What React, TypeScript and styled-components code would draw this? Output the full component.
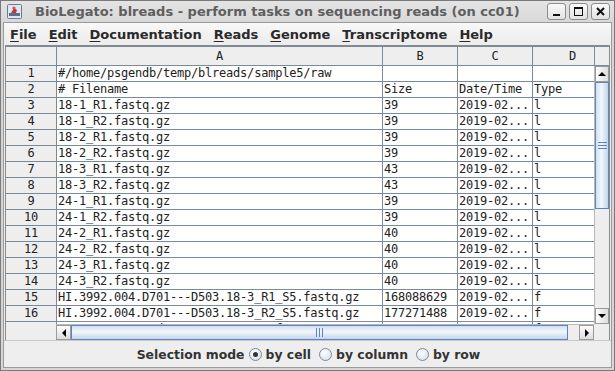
import React from 'react';
import styled, { createGlobalStyle } from 'styled-components';

const Global = createGlobalStyle`
  html, body { margin: 0; padding: 0; width: 615px; height: 371px; overflow: hidden; background: #eeeeee; }
  * { box-sizing: border-box; }
`;

const Window = styled.div`
  width: 615px;
  height: 371px;
  display: flex;
  flex-direction: column;
  background: #d6d6d6;
  border: 1px solid #7a7a7a;
`;

const TitleBar = styled.div`
  height: 21px;
  display: flex;
  align-items: center;
  padding: 0 4px 0 6px;
  background: linear-gradient(#e4e4e4, #d8d8d8);
`;

const Title = styled.div`
  flex: 1;
  margin-left: 13px;
  font: bold 13px "DejaVu Sans", sans-serif;
  color: #5e5e5e;
  white-space: nowrap;
`;

const WinButtons = styled.div`
  display: flex;
  gap: 3px;
`;

const WinButton = styled.div`
  width: 19px;
  height: 17px;
  border: 1px solid #8d8d8d;
  border-radius: 3px;
  background: linear-gradient(#fafafa, #e2e2e2);
  display: flex;
  align-items: center;
  justify-content: center;
`;

const Inner = styled.div`
  flex: 1;
  display: flex;
  flex-direction: column;
  margin: 0 2px 2px 2px;
  border: 1px solid #9a9a9a;
  background: #eeeeee;
  min-height: 0;
`;

const MenuBar = styled.div`
  height: 22px;
  display: flex;
  align-items: center;
  padding-left: 0;
  background: linear-gradient(#f8f8f8, #ececec);
`;

const MenuItem = styled.div`
  font: bold 13px "DejaVu Sans", sans-serif;
  color: #2a2a2a;
  padding: 0 6px;
  white-space: nowrap;
  u { text-decoration: underline; text-underline-offset: 2px; }
`;

const TableArea = styled.div`
  flex: 1;
  min-height: 0;
  margin: 0 1px 0 1px;
  display: grid;
  grid-template-columns: 50px 1fr 15px;
  grid-template-rows: 20px 1fr 16px;
  border: 1px solid #8a8a8a;
  border-bottom: none;
  background: #eeeeee;
`;

const Corner = styled.div<{ $left?: boolean }>`
  background: #eeeeee;
  border-top: 1px solid #7a8a99;
  border-bottom: 1px solid #7a8a99;
  border-left: ${p => (p.$left ? '1px solid #7a8a99' : 'none')};
`;

const mono = `
  font-family: "DejaVu Sans Mono", monospace;
  font-size: 12px;
  letter-spacing: -0.22px;
  color: #222;
`;

const HeaderViewport = styled.div`
  overflow: hidden;
  display: flex;
  border-top: 1px solid #7a8a99;
  border-bottom: 1px solid #7a8a99;
`;

const HeaderCell = styled.div<{ $w: number }>`
  flex: 0 0 ${p => p.$w}px;
  border-left: 1px solid #7a8a99;
  display: flex;
  align-items: center;
  justify-content: center;
  ${mono}
`;

const RowHeaderCol = styled.div`
  overflow: hidden;
  display: flex;
  flex-direction: column;
`;

const RowNum = styled.div`
  flex: 0 0 16px;
  height: 16px;
  border-bottom: 1px solid #7a8a99;
  display: flex;
  align-items: center;
  justify-content: center;
  line-height: 15px;
  ${mono}
`;

const BodyViewport = styled.div`
  overflow: hidden;
  background: #ffffff;
  display: flex;
  flex-direction: column;
`;

const Row = styled.div`
  flex: 0 0 16px;
  display: flex;
`;

const Cell = styled.div<{ $w: number }>`
  flex: 0 0 ${p => p.$w}px;
  height: 16px;
  border-left: 1px solid #7a8a99;
  border-bottom: 1px solid #7a8a99;
  padding-left: 1px;
  line-height: 15px;
  white-space: nowrap;
  overflow: hidden;
  ${mono}
`;

const VScroll = styled.div`
  display: flex;
  flex-direction: column;
  background: #eeeeee;
  border-left: 1px solid #b8b8b8;
`;

const ArrowBtn = styled.div<{ $h?: boolean }>`
  flex: 0 0 ${p => (p.$h ? 'auto' : '16px')};
  width: ${p => (p.$h ? '15px' : 'auto')};
  background: linear-gradient(${p => (p.$h ? '180deg' : '90deg')}, #fdfdfd, #dcdcdc);
  border: 1px solid #9a9a9a;
  display: flex;
  align-items: center;
  justify-content: center;
`;

const Track = styled.div<{ $h?: boolean }>`
  flex: 1;
  display: flex;
  flex-direction: ${p => (p.$h ? 'row' : 'column')};
  background: #eeeeee;
`;

const Thumb = styled.div<{ $h?: boolean }>`
  border: 1px solid #6382bf;
  background: ${p =>
    p.$h
      ? 'linear-gradient(180deg, #cfe0f3, #f2f7fc 45%, #c1d6ee)'
      : 'linear-gradient(90deg, #cfe0f3, #f2f7fc 45%, #c1d6ee)'};
  display: flex;
  align-items: center;
  justify-content: center;
`;

const HScroll = styled.div`
  display: flex;
  background: #eeeeee;
  border-top: 1px solid #b8b8b8;
`;

const BottomCorner = styled.div`
  background: #eeeeee;
`;

const BottomPanel = styled.div`
  height: 27px;
  display: flex;
  align-items: center;
  justify-content: center;
  padding-left: 2px;
  border-top: 1px solid #c8c8c8;
  font: bold 12.4px "DejaVu Sans", sans-serif;
  color: #333;
`;

const ModeLabel = styled.span`
  margin-right: 4px;
`;

const RadioLabel = styled.label<{ $first?: boolean }>`
  display: flex;
  align-items: center;
  gap: 4px;
  margin-left: ${p => (p.$first ? '0' : '8px')};
`;

const RadioCircle = styled.span<{ $on?: boolean }>`
  width: 13px;
  height: 13px;
  border-radius: 50%;
  border: 1px solid #7a8a99;
  background: radial-gradient(circle at 40% 35%, #ffffff, #d4e2f0 80%);
  display: inline-flex;
  align-items: center;
  justify-content: center;
  &::after {
    content: '';
    display: ${p => (p.$on ? 'block' : 'none')};
    width: 5px;
    height: 5px;
    border-radius: 50%;
    background: #333;
  }
`;

const colW = [326, 75, 75, 80];

const rows: string[][] = [
  ['#/home/psgendb/temp/blreads/sample5/raw', '', '', ''],
  ['# Filename', 'Size', 'Date/Time', 'Type'],
  ['18-1_R1.fastq.gz', '39', '2019-02...', 'l'],
  ['18-1_R2.fastq.gz', '39', '2019-02...', 'l'],
  ['18-2_R1.fastq.gz', '39', '2019-02...', 'l'],
  ['18-2_R2.fastq.gz', '39', '2019-02...', 'l'],
  ['18-3_R1.fastq.gz', '43', '2019-02...', 'l'],
  ['18-3_R2.fastq.gz', '43', '2019-02...', 'l'],
  ['24-1_R1.fastq.gz', '39', '2019-02...', 'l'],
  ['24-1_R2.fastq.gz', '39', '2019-02...', 'l'],
  ['24-2_R1.fastq.gz', '40', '2019-02...', 'l'],
  ['24-2_R2.fastq.gz', '40', '2019-02...', 'l'],
  ['24-3_R1.fastq.gz', '40', '2019-02...', 'l'],
  ['24-3_R2.fastq.gz', '40', '2019-02...', 'l'],
  ['HI.3992.004.D701---D503.18-3_R1_S5.fastq.gz', '168088629', '2019-02...', 'f'],
  ['HI.3992.004.D701---D503.18-3_R2_S5.fastq.gz', '177271488', '2019-02...', 'f'],
  ['HI.3992.004.Index_1.18-1_R1_S5.fastq.gz', '183257703', '2019-02...', 'f'],
];

const menus = [
  ['F', 'ile'],
  ['E', 'dit'],
  ['D', 'ocumentation'],
  ['R', 'eads'],
  ['G', 'enome'],
  ['T', 'ranscriptome'],
  ['H', 'elp'],
];

const Tri = ({ dir }: { dir: 'up' | 'down' | 'left' | 'right' }) => {
  const pts = {
    up: '0,4 4,0 8,4',
    down: '0,0 8,0 4,4',
    left: '4,0 4,8 0,4',
    right: '0,0 0,8 4,4',
  }[dir];
  const vert = dir === 'up' || dir === 'down';
  return (
    <svg width={vert ? 8 : 4} height={vert ? 4 : 8} viewBox={vert ? '0 0 8 4' : '0 0 4 8'}>
      <polygon points={pts} fill="#000" />
    </svg>
  );
};

const Grip = ({ h }: { h?: boolean }) =>
  h ? (
    <svg width="7" height="9">
      <g stroke="#6382bf" strokeWidth="1">
        <line x1="0.5" y1="0" x2="0.5" y2="9" />
        <line x1="3.5" y1="0" x2="3.5" y2="9" />
        <line x1="6.5" y1="0" x2="6.5" y2="9" />
      </g>
    </svg>
  ) : (
    <svg width="9" height="7">
      <g stroke="#6382bf" strokeWidth="1">
        <line x1="0" y1="0.5" x2="9" y2="0.5" />
        <line x1="0" y1="3.5" x2="9" y2="3.5" />
        <line x1="0" y1="6.5" x2="9" y2="6.5" />
      </g>
    </svg>
  );

const AppIcon = () => (
  <svg width="15" height="15" viewBox="0 0 15 15">
    <rect x="0.5" y="0.5" width="14" height="14" rx="1" fill="#dfe6ef" stroke="#6a7c90" />
    <rect x="2" y="9" width="11" height="3" fill="#5a6f86" />
    <path d="M4 9 L7 4 L10 6 L9 9 Z" fill="#c8323c" />
    <circle cx="7" cy="4" r="1.6" fill="#e04a50" />
  </svg>
);

export default function App() {
  return (
    <>
      <Global />
      <Window>
        <TitleBar>
          <AppIcon />
          <Title>BioLegato: blreads - perform tasks on sequencing reads (on cc01)</Title>
          <WinButtons>
            <WinButton>
              <svg width="9" height="9">
                <rect x="1" y="7" width="7" height="2" fill="#111" />
              </svg>
            </WinButton>
            <WinButton>
              <svg width="9" height="9">
                <rect x="0.5" y="0.5" width="8" height="8" fill="none" stroke="#111" />
                <rect x="0.5" y="0.5" width="8" height="1.5" fill="#111" />
              </svg>
            </WinButton>
            <WinButton>
              <svg width="9" height="9">
                <path d="M1 1 L8 8 M8 1 L1 8" stroke="#111" strokeWidth="2" />
              </svg>
            </WinButton>
          </WinButtons>
        </TitleBar>
        <Inner>
          <MenuBar>
            {menus.map(([a, b]) => (
              <MenuItem key={a + b}>
                <u>{a}</u>
                {b}
              </MenuItem>
            ))}
          </MenuBar>
          <TableArea>
            <Corner />
            <HeaderViewport>
              {['A', 'B', 'C', 'D'].map((c, i) => (
                <HeaderCell key={c} $w={colW[i]}>
                  {c}
                </HeaderCell>
              ))}
            </HeaderViewport>
            <Corner $left />
            <RowHeaderCol>
              {rows.map((_, i) => (
                <RowNum key={i}>{i + 1}</RowNum>
              ))}
            </RowHeaderCol>
            <BodyViewport>
              {rows.map((r, i) => (
                <Row key={i}>
                  {r.map((v, j) => (
                    <Cell key={j} $w={colW[j]}>
                      {v}
                    </Cell>
                  ))}
                </Row>
              ))}
            </BodyViewport>
            <VScroll>
              <ArrowBtn>
                <Tri dir="up" />
              </ArrowBtn>
              <Track>
                <Thumb style={{ height: 127 }}>
                  <Grip />
                </Thumb>
              </Track>
              <ArrowBtn>
                <Tri dir="down" />
              </ArrowBtn>
            </VScroll>
            <BottomCorner />
            <HScroll>
              <ArrowBtn $h>
                <Tri dir="left" />
              </ArrowBtn>
              <Track $h>
                <Thumb $h style={{ width: 497 }}>
                  <Grip h />
                </Thumb>
              </Track>
              <ArrowBtn $h>
                <Tri dir="right" />
              </ArrowBtn>
            </HScroll>
            <BottomCorner />
          </TableArea>
          <BottomPanel>
            <ModeLabel>Selection mode</ModeLabel>
            <RadioLabel $first>
              <RadioCircle $on />
              by cell
            </RadioLabel>
            <RadioLabel>
              <RadioCircle />
              by column
            </RadioLabel>
            <RadioLabel>
              <RadioCircle />
              by row
            </RadioLabel>
          </BottomPanel>
        </Inner>
      </Window>
    </>
  );
}
